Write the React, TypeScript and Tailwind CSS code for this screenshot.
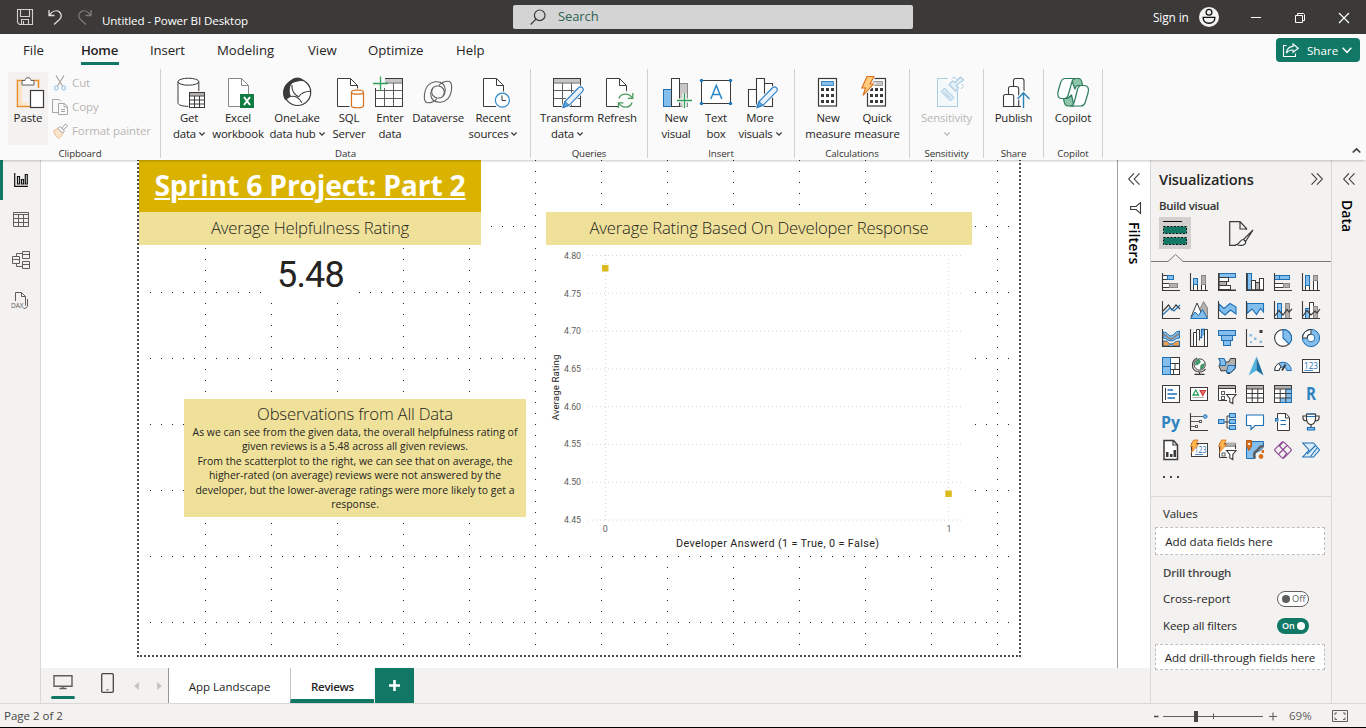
import type { ReactNode } from "react";
import clsx from "clsx";

const K = "#3b3a39";
const BLUE = "#1f6fb5";
const LIGHT = "#83beec";
const GRAY = "#b3b0ad";

type P = { children?: ReactNode };

const Svg = ({ children, w, h, className }: P & { w: number; h: number; className?: string }) => (
  <svg width={w} height={h} viewBox={`0 0 ${w} ${h}`} fill="none" className={clsx("block shrink-0 overflow-visible", className)}>
    {children}
  </svg>
);

const Chev = ({ color = K, w = 6 }: { color?: string; w?: number }) => (
  <svg width={w} height={w * 0.67} viewBox="0 0 6 4" fill="none" className="block shrink-0 overflow-visible">
    <path d="M.4 .5 3 3.2 5.6 .5" stroke={color} strokeWidth={w > 6 ? 0.9 : 1.2} />
  </svg>
);

/* ---------- ribbon icons, 32 x 33 ---------- */

const Page = ({ x = 6, color = K }: { x?: number; color?: string }) => (
  <g transform={`translate(${x} 0)`}>
    <path d="M.5 2.5H13.5L20.5 9.5V30.5H.5Z" fill="#fff" stroke={color} />
    <path d="M13.5 2.5V9.5H20.5" stroke={color} />
  </g>
);
const Pencil = ({ x = 11 }: { x?: number }) => (
  <g transform={`translate(${x} 10)`}>
    <path d="M1 21.5 3 15.5 16.3 2C17.6.6 19.3.6 20.4 1.7 21.6 2.9 21.5 4.5 20.2 5.8L7 19.3Z" fill="#fff" stroke="#fafafa" strokeWidth="3" />
    <path d="M1 21.5 3 15.5 16.3 2C17.6.6 19.3.6 20.4 1.7 21.6 2.9 21.5 4.5 20.2 5.8L7 19.3Z" fill="#e8f3fc" stroke="#2b7cc0" strokeWidth="1.1" />
    <path d="M1 21.5 3 15.5 7 19.3Z" fill="#5ea6de" stroke="#2b7cc0" />
  </g>
);
const Calc = ({ bar, x = 6 }: { bar: string; x?: number }) => (
  <g transform={`translate(${x} 0)`}>
    <rect x=".5" y="2.5" width="18" height="27.5" fill="#fff" stroke={K} strokeWidth="1.2" />
    <rect x="3.5" y="5.5" width="12" height="4" fill={bar} stroke={bar === LIGHT ? BLUE : "#8a8886"} strokeWidth=".8" />
    {[12, 18, 24].map((y) => [3, 8, 13].map((c) => <rect key={`${c}-${y}`} x={c} y={y} width="3" height="3" fill={K} />))}
  </g>
);

const SWIRL = "M15.5 22C11.5 21.600 9 18 9.800 14.500 10.500 11.500 13 9.800 16 10M15.500 22C13 25.500 8 27.500 4.500 26.500 1 24.500 2 14 6 9.500 10 5 17 4.500 21 8 24 11 24 17 21 20";

const icons: Record<string, ReactNode> = {
  paste: (
    <>
      <path d="M12 5.5H7V29.5H15V27H10V8H14Z" fill="#fbe3c4" />
      <path d="M12 4.5H5.5V30.5H18M20 4.5H26.5V12" stroke="#e8912d" strokeWidth="1.6" />
      <path d="M10 9V4.5H13C13 .8 19 .8 19 4.5H22V9Z" fill="#fff" stroke="#605e5c" />
      <rect x="18.5" y="14.5" width="13" height="17" fill="#fff" stroke={K} strokeWidth="1.2" />
    </>
  ),
  getdata: (
    <>
      <path d="M5 5.6V26.8C5 29 9.5 30.5 15.5 30.5H17V17H26V5.6" fill="#fff" />
      <ellipse cx="15.4" cy="5.7" rx="10.4" ry="3.5" fill="#fff" stroke={K} />
      <path d="M5 5.6V26.8C5 29 9.5 30.3 15.2 30.4M25.8 5.6V15" stroke={K} />
      <rect x="16.5" y="16.5" width="15" height="15" fill="#fff" stroke={K} />
      <path d="M17 17H31V19.6H17Z" fill={GRAY} />
      <path d="M16.5 20H31.5M16.5 24H31.5M16.5 28H31.5M21.5 20V31.5M26.5 20V31.5" stroke={K} />
    </>
  ),
  excel: (
    <>
      <Page color="#8a8886" />
      <rect x="18" y="18" width="14" height="14" fill="#107c41" />
      <path d="M22 21 28 29M28 21 22 29" stroke="#fff" strokeWidth="2" />
    </>
  ),
  onelake: (
    <>
      <circle cx="16.5" cy="16.3" r="13.2" fill="#fff" stroke={K} strokeWidth="1.2" />
      <path d="M9.5 5.5C12 1.400 19 .9 22 4.500 17.500 4.300 12.500 5.800 9.500 7.500Z" fill={K} stroke={K} />
      <path d="M9.500 6C3 8 .6 17 4.200 23.500L9.500 20.500C7.200 15 8.300 9.500 11 7Z" fill={K} stroke={K} />
      <path d="M9.500 20.500C14 19.500 17 20.500 21 26.800M11 9C10.500 14 13 19 17.500 20.800M17.500 21C20 17 24 15.200 29.500 15.200" stroke={K} strokeWidth="1.100" />
    </>
  ),
  sql: (
    <>
      <Page x={4} />
      <rect x="16.5" y="12.5" width="16" height="21" fill="#fafafa" />
      <path d="M18.5 16.5V30C18.5 32.3 30.5 32.3 30.5 30V16.5" fill="#fff" stroke="#d8701e" strokeWidth="1.2" />
      <ellipse cx="24.5" cy="16.2" rx="6" ry="2" fill="#fff" stroke="#d8701e" strokeWidth="1.2" />
    </>
  ),
  enter: (
    <>
      <rect x="1.5" y="2.5" width="27" height="28" fill="#fff" stroke={K} />
      <path d="M10 3H28V6.5H10Z" fill="#c8c6c4" />
      <path d="M1.5 14.5H28.5M1.5 22.5H28.5M10.5 10V30.5M19.5 7V30.5M10 7H28.5" stroke="#605e5c" />
      <path d="M0 1H11V12H0Z" fill="#fafafa" />
      <path d="M6.5 .5V15M-1 7.5H14" stroke="#2f9e5b" strokeWidth="1.3" />
    </>
  ),
  dataverse: (
    <g stroke="#605e5c" strokeWidth="1.1">
      <path d={SWIRL} />
      <path d={SWIRL} transform="rotate(180 16 16)" />
    </g>
  ),
  recent: (
    <>
      <Page />
      <circle cx="25.4" cy="24.2" r="9" fill="#fafafa" />
      <circle cx="25.4" cy="24.2" r="7" fill="#fff" stroke="#2b88c8" strokeWidth="1.2" />
      <path d="M25 19.5V24.5H29" stroke={K} />
    </>
  ),
  transform: (
    <>
      <rect x="2.5" y="2.5" width="27" height="28" fill="#fff" stroke={K} />
      <path d="M3 3H29V6.5H3Z" fill="#c8c6c4" />
      <path d="M2.5 7H29.5M2.5 14.5H29.5M2.5 22.5H29.5M11.5 7V30.5M20.5 7V30.5" stroke="#605e5c" />
      <Pencil />
    </>
  ),
  refresh: (
    <>
      <Page x={5} />
      <circle cx="24.5" cy="24.5" r="9.5" fill="#fafafa" />
      <path d="M18 22.5C19.8 17 28 16.5 31 21.8M31 26.5C29.2 32.3 21 32.7 18 27.3" stroke="#4a9b5f" strokeWidth="1.3" />
      <path d="M31.8 17V22.3H26.8M17.4 32V26.8H22.4" stroke="#4a9b5f" strokeWidth="1.3" />
    </>
  ),
  newvisual: (
    <>
      <rect x="3.5" y="13.5" width="8" height="17" fill={LIGHT} stroke={BLUE} />
      <rect x="19.5" y="7.5" width="8" height="23" fill="#c8c6c4" stroke="#8a8886" />
      <rect x="11.5" y="2.5" width="8" height="28" fill="#fff" stroke={K} />
      <path d="M17 24.5H32M24.5 17V32" stroke="#fafafa" strokeWidth="4" />
      <path d="M17 24.5H32M24.5 17V32" stroke="#2f9e5b" strokeWidth="1.3" />
    </>
  ),
  textbox: (
    <>
      <rect x="1.5" y="4.5" width="29" height="23" fill="#fff" stroke={K} />
      {[[1.5, 4.5], [30.5, 4.5], [1.5, 27.5], [30.5, 27.5]].map(([x, y]) => (
        <circle key={`${x}-${y}`} cx={x} cy={y} r="1.7" fill="#1a78b8" />
      ))}
      <path d="M10.8 23 16.3 9.5 21.8 23M12.8 18.5H19.9" stroke="#2b88c8" strokeWidth="1.5" />
    </>
  ),
  morevisuals: (
    <>
      <path d="M4.5 13.5H12.5V30.5H4.5ZM12.5 2.5H20.5V30.5H12.5ZM20.5 7.5H28.5V30.5H20.5Z" fill="#fff" stroke={K} strokeWidth="1.1" />
      <Pencil x={12} />
    </>
  ),
  newmeasure: <Calc bar={LIGHT} />,
  quickmeasure: (
    <>
      <Calc bar="#c8c6c4" />
      <path d="M6 .5H13L9 8H12.5L2 19.5 4.5 12H.8Z" fill="#ffd08a" stroke="#fafafa" strokeWidth="3" />
      <path d="M6 .5H13L9 8H12.5L2 19.5 4.5 12H.8Z" fill="#ffcb7d" stroke="#d8701e" strokeWidth="1.1" />
    </>
  ),
  sensitivity: (
    <g stroke="#a9cbe0">
      <path d="M6.5 2.5H17M26.5 14V30.5H6.5V2.5" fill="#f3f8fb" />
      <path d="M10 15.5 13.5 12 23 21.5 19.5 25Z" fill="#d6e8f3" />
      <path d="M14 17 18.5 21.5" />
      <path d="M18 8.5 24.5 15 27.5 12 25 9.5 32.5 4 29.5 1 24 6.5 21.5 5Z" fill="#e4f1f8" strokeWidth="1.2" />
      <path d="M20.5 3 23 .8 26 3.5M30.5 8 32.5 10.5 30 13" />
    </g>
  ),
  publish: (
    <>
      <path d="M15.5 10V5C15.5 3 16 2.5 17.5 2.5H24C25.5 2.5 26 3 26 5V15M10.5 18V12.5C10.5 11 11 10.5 12.5 10.5H18C20 10.5 20.7 11 20.7 12.5V30M5.5 20.5C5.5 19 6 18.5 7.5 18.5H13.5C15 18.5 15.7 19 15.7 20.5V30.5H5.5ZM15.7 30.5H23" fill="#fff" stroke={K} strokeWidth="1.1" />
      <path d="M25.5 32V17M19.5 23 25.5 16.8 31.5 23" stroke="#fafafa" strokeWidth="3.5" />
      <path d="M25.5 32V17M19.5 23 25.5 16.8 31.5 23" stroke="#2b82b8" strokeWidth="1.4" />
    </>
  ),
  copilot: (
    <g stroke="#2b7a5c" strokeWidth="1.2" strokeLinejoin="round">
      <path d="M16.5 2.5H22C24.5 2.5 25 5.5 25.5 9.5H21C19 9.5 18.5 11 18 13L14.5 4Z" fill="#8cc5a8" />
      <path d="M6.5 22.5C7 26.5 8 30 10.5 30H17L14.5 19 10.5 22.5Z" fill="#8cc5a8" />
      <path d="M8.5 2.5H18.5C15.5 2.5 15 5 13.5 11L11.5 18C10.8 21 10 22.5 7.5 22.5H5C1 22.5.2 19.5 1.2 15L3.5 7C4.3 4 5.5 2.5 8.5 2.5Z" fill="#fff" />
      <path d="M23.5 30H13.5C16.5 30 17 27.5 18.5 21.5L20.2 14.5C21 11 22 9.5 24.5 9.5H27C31 9.5 32.3 12.5 31 17L28.5 25.5C27.7 28.5 26.5 30 23.5 30Z" fill="#fff" />
    </g>
  ),
};

type Btn = { icon: string; w: string; lines: string[]; chev?: boolean; off?: boolean };

const RibbonButton = ({ icon, w, lines, chev, off }: Btn) => (
  <div className={clsx("flex shrink-0 flex-col items-center pt-[7px]", w, off ? "text-[#b8b6b4]" : "text-[#252423]")}>
    <Svg w={32} h={33}>{icons[icon]}</Svg>
    <div className="mt-[1px] flex flex-col items-center text-[11.4px] leading-[16px] tracking-[-0.2px] whitespace-nowrap">
      {lines.map((l, i) => (
        <span key={i} className="flex h-4 items-center gap-[3px]">
          {l}
          {chev && i === lines.length - 1 && <Chev color={off ? "#b8b6b4" : K} />}
        </span>
      ))}
    </div>
  </div>
);

const groups: { label: string; w: string; pad: string; items: Btn[] }[] = [
  {
    label: "Data", w: "w-[370px]", pad: "pl-[4px]",
    items: [
      { icon: "getdata", w: "w-[48px]", lines: ["Get", "data"], chev: true },
      { icon: "excel", w: "w-[50px]", lines: ["Excel", "workbook"] },
      { icon: "onelake", w: "w-[68px]", lines: ["OneLake", "data hub"], chev: true },
      { icon: "sql", w: "w-[36px]", lines: ["SQL", "Server"] },
      { icon: "enter", w: "w-[46px]", lines: ["Enter", "data"] },
      { icon: "dataverse", w: "w-[50px]", lines: ["Dataverse"] },
      { icon: "recent", w: "w-[60px]", lines: ["Recent", "sources"], chev: true },
    ],
  },
  {
    label: "Queries", w: "w-[117px]", pad: "pl-[5px]",
    items: [
      { icon: "transform", w: "w-[62px]", lines: ["Transform", "data"], chev: true },
      { icon: "refresh", w: "w-[38px]", lines: ["Refresh"] },
    ],
  },
  {
    label: "Insert", w: "w-[147px]", pad: "pl-[8px]",
    items: [
      { icon: "newvisual", w: "w-[40px]", lines: ["New", "visual"] },
      { icon: "textbox", w: "w-[40px]", lines: ["Text", "box"] },
      { icon: "morevisuals", w: "w-[48px]", lines: ["More", "visuals"], chev: true },
    ],
  },
  {
    label: "Calculations", w: "w-[115px]", pad: "pl-[9px]",
    items: [
      { icon: "newmeasure", w: "w-[48px]", lines: ["New", "measure"] },
      { icon: "quickmeasure", w: "w-[50px]", lines: ["Quick", "measure"] },
    ],
  },
  { label: "Sensitivity", w: "w-[74px]", pad: "pl-[0px]", items: [{ icon: "sensitivity", w: "w-[73px]", lines: ["Sensitivity", ""], chev: true, off: true }] },
  { label: "Share", w: "w-[60px]", pad: "pl-[0px]", items: [{ icon: "publish", w: "w-[59px]", lines: ["Publish"] }] },
  { label: "Copilot", w: "w-[59px]", pad: "pl-[0px]", items: [{ icon: "copilot", w: "w-[58px]", lines: ["Copilot"] }] },
];

const Group = ({ label, w, children }: P & { label: string; w: string }) => (
  <div className={clsx("flex h-[89px] shrink-0 flex-col border-r border-[#d2d0ce]", w)}>
    <div className="flex h-[77px] shrink-0 items-start">{children}</div>
    <div className="mt-[1px] text-center text-[9.7px] leading-[14px] tracking-[-0.1px] text-[#323130]">{label}</div>
  </div>
);

const TitleBar = () => (
  <header className="flex h-[34px] shrink-0 items-center bg-[#3b3a39] text-white">
    <Svg w={16} h={16} className="ml-[17px]">
      <path d="M.5 .5H15.5V15.5H2.5L.5 13.5ZM3.5 .5V7.5H12.5V.5M4.5 15V10.5H11.5V15M6.5 12V15" stroke="#d2d0ce" strokeWidth="1.1" />
    </Svg>
    <Svg w={14} h={16} className="ml-[15px]">
      <path d="M1 1V6.5H6.5M1.3 6.3C4 2.5 8 .8 11 2.6 14.3 5 13.5 8.5 11.5 10.5L6 15.5" stroke="#e1dfdd" strokeWidth="1.3" />
    </Svg>
    <Svg w={14} h={16} className="ml-[16px]">
      <path d="M13 1V6.5H7.5M12.7 6.3C10 2.5 6 .8 3 2.6-.3 5 .5 8.5 2.5 10.5L8 15.5" stroke="#7c7a78" strokeWidth="1.3" />
    </Svg>
    <span className="mt-[7px] ml-[10px] w-[411px] text-[11.6px] tracking-[-0.1px] whitespace-nowrap">Untitled - Power BI Desktop</span>
    <div className="flex h-6 w-[400px] items-center rounded-[2px] bg-[#d4d4d4] pl-[17px]">
      <Svg w={16} h={16}>
        <circle cx="9.7" cy="6.3" r="5.3" stroke={K} strokeWidth="1.2" />
        <path d="M6 10.2 .7 15.5" stroke={K} strokeWidth="1.2" />
      </Svg>
      <span className="ml-[12px] text-[13px] tracking-[-0.1px] text-[#2f6353]">Search</span>
    </div>
    <span className="mt-[2px] ml-[240px] w-[46px] text-[11.8px] tracking-[-0.1px] whitespace-nowrap">Sign in</span>
    <Svg w={20} h={20}>
      <circle cx="10" cy="10" r="10" fill="#f3f2f1" />
      <circle cx="10" cy="5.3" r="2.9" stroke="#111" strokeWidth="1.3" />
      <path d="M4.2 10.4H15.8C16 13.8 14 16.3 10 16.3S4 13.8 4.2 10.4Z" stroke="#111" strokeWidth="1.4" />
    </Svg>
    <Svg w={10} h={10} className="ml-[32px]"><path d="M0 5.5H10" stroke="#fff" /></Svg>
    <Svg w={10} h={10} className="mt-[2px] ml-[34px]">
      <path d="M.5 2.5H7.5V9.5H.5ZM2.5 2V.5H8.5L9.5 1.5V7.5H8" stroke="#fff" />
    </Svg>
    <Svg w={10} h={10} className="mt-[2px] ml-[34px]"><path d="M0 0 10 10M10 0 0 10" stroke="#fff" strokeWidth="1.2" /></Svg>
  </header>
);

const menu: [string, string][] = [
  ["File", "w-[58px]"], ["Home", "w-[70px]"], ["Insert", "w-[66px]"], ["Modeling", "w-[91px]"],
  ["View", "w-[60px]"], ["Optimize", "w-[88px]"], ["Help", "w-[40px]"],
];

const Menu = () => (
  <nav className="flex h-[35px] shrink-0 items-start bg-[#fafafa] pl-[23px] text-[13.2px] leading-[20px] text-[#252423]">
    {menu.map(([m, w]) => (
      <div key={m} className={w}>
        <span className={clsx("inline-block h-[31px] pt-[6px] whitespace-nowrap", m === "Home" && "w-[38px] border-b-3 border-[#117865] font-semibold tracking-[-0.3px]", m === "Insert" && "-ml-px tracking-[-0.1px]")}>{m}</span>
      </div>
    ))}
    <button className="mt-1 mr-[6px] ml-auto flex h-6 w-[84px] items-center rounded bg-[#117865] pl-[7px] text-white">
      <Svg w={16} h={14}>
        <path d="M3.5 2.5H.5V13.5H12.5V10.5" stroke="#fff" strokeWidth="1.1" />
        <path d="M10 1 15.3 5.3 10 9.3V7C7 6.8 5 7.8 3.3 10.3 3.8 6.3 6 3.6 10 3.4Z" stroke="#fff" strokeWidth="1.1" />
      </Svg>
      <span className="mt-[2px] ml-[8px] text-[11.6px]">Share</span>
      <span className="ml-[4px]"><Chev color="#fff" w={10} /></span>
    </button>
  </nav>
);

const Ribbon = () => (
  <div className="relative z-10 flex h-[91px] shrink-0 items-start bg-[#fafafa] shadow-[0_2px_2px_-1px_rgba(0,0,0,0.22)]">
    <Group label="Clipboard" w="w-[161px]">
      <div className="mt-[3px] ml-[8px] flex h-[73px] w-[40px] flex-col items-center bg-[#f3f2f1] pt-[4px]">
        <Svg w={32} h={33} className="-ml-[1px]">{icons.paste}</Svg>
        <span className="mt-[1px] text-[11.5px] leading-[16px] tracking-[-0.1px] text-[#252423]">Paste</span>
      </div>
      <div className="flex flex-col pt-[2px] pl-[4px] text-[11.5px] tracking-[-0.1px] text-[#b8b6b4]">
        <div className="flex h-6 items-center gap-[4px]">
          <Svg w={16} h={16}>
            <path d="M4 .5 10.5 11M12 .5 5.5 11" stroke="#a19f9d" strokeWidth="1.1" />
            <circle cx="4.3" cy="13" r="2" stroke="#8bb8dc" /><circle cx="11.7" cy="13" r="2" stroke="#8bb8dc" />
          </Svg>
          Cut
        </div>
        <div className="flex h-6 items-center gap-[4px]">
          <Svg w={16} h={16}>
            <path d="M6 13.5H.5V.5H7L9 2.5M6.5 4.5H12.5L15.5 7.5V15.5H6.5ZM12 4.5V8H15.5M9 10.5H13M9 12.5H13" stroke="#a8a6a4" />
          </Svg>
          Copy
        </div>
        <div className="flex h-6 items-center gap-[4px] whitespace-nowrap">
          <Svg w={16} h={16}>
            <path d="M1.5 8 6.5 5 11.5 10 7 15.5C4.5 14.5 2.5 11.5 1.5 8Z" fill="#fbe3c9" stroke="#e8bd94" />
            <path d="M6 5.5 8 3.5 12.5 8 10.5 10ZM10 5 13.5 1 15.5 3 11.5 6.5Z" fill="#fff" stroke="#a19f9d" />
          </Svg>
          Format painter
        </div>
      </div>
    </Group>
    {groups.map((g) => (
      <Group key={g.label} label={g.label} w={g.w}>
        <div className={clsx("flex", g.pad)}>
          {g.items.map((b) => <RibbonButton key={b.icon} {...b} />)}
        </div>
      </Group>
    ))}
    <Svg w={9} h={5} className="mt-[79px] mr-[5px] ml-auto"><path d="M.7 4.5 4.5 .9 8.3 4.5" stroke={K} strokeWidth="1.6" /></Svg>
  </div>
);

const Rail = () => (
  <aside className="flex w-[41px] shrink-0 flex-col border-r border-[#dad8d6] bg-[#f3f2f1]">
    <div className="flex h-[40px] items-center border-l-3 border-[#117865] pl-[11px]">
      <Svg w={14} h={14}>
        <path d="M.7 0V13.3H14M3.5 11V3.5H5.5V11ZM7.5 11V6.5H9.5V11ZM11.3 11V1.5H13.3V11Z" stroke="#111" strokeWidth="1.2" />
      </Svg>
    </div>
    <div className="flex h-[40px] items-start pt-[12px] pl-[13px]">
      <Svg w={16} h={15}><path d="M.5 .5H15.5V14.5H.5ZM.5 2.5H15.5M.5 6.5H15.5M.5 10.5H15.5M5.5 2.5V14.5M10.5 2.5V14.5" stroke="#605e5c" /></Svg>
    </div>
    <div className="flex h-[40px] items-center pl-[12px]">
      <Svg w={18} h={18}><path d="M10.5 .5H17.5V7.5H10.5ZM10.5 10.5H17.5V17.5H10.5ZM.5 5.5H7.5V12.5H.5ZM.5 8.500H7.5M10.5 3.500H17.5M10.5 13.500H17.5M4.5 5.5V2.5H10M4.5 12.5V15.5H10" stroke="#605e5c" /></Svg>
    </div>
    <div className="flex h-[40px] items-start pt-[12px] pl-[11px]">
      <Svg w={18} h={17}>
        <path d="M4.5 9V.5H10.5L14.5 4.5V13.5M10.5 .5V4.5H14.5M12.5 16.5C15.5 16.5 16.5 15 16.5 13V7" stroke="#605e5c" />
        <text x="0" y="16" fontSize="6.5" className="fill-[#605e5c]">DAX</text>
      </Svg>
    </div>
  </aside>
);

const cols = Array.from({ length: 13 }, (_, i) => 68 + 66 * i);
const rows = Array.from({ length: 7 }, (_, i) => 66 + 66 * i);
const ticks = ["4.80", "4.75", "4.70", "4.65", "4.60", "4.55", "4.50", "4.45"];

const Scatter = () => (
  <Svg w={426} h={310} className="bg-white font-['Roboto',sans-serif]">
    {ticks.map((t, i) => (
      <g key={t}>
        <line x1="42" x2="418" y1={10.5 + i * 37.8} y2={10.5 + i * 37.8} stroke="#d8d6d4" strokeDasharray="1 3" />
        <text x="18" y={13.8 + i * 37.7} fontSize="8.8" textLength="17" className="fill-[#605e5c]">{t}</text>
      </g>
    ))}
    <line x1="59.5" x2="59.5" y1="10" y2="276" stroke="#d0cecc" strokeDasharray="1 3" />
    <line x1="402.5" x2="402.5" y1="10" y2="276" stroke="#e0dedc" strokeDasharray="1 3" />
    <rect x="56" y="20" width="6.5" height="6.5" fill="#dcbb1f" />
    <rect x="399.3" y="245.5" width="6.5" height="6.5" fill="#dcbb1f" />
    <text x="59.3" y="287" fontSize="8.8" textAnchor="middle" className="fill-[#605e5c]">0</text>
    <text x="403" y="287" fontSize="8.8" textAnchor="middle" className="fill-[#605e5c]">1</text>
    <text x="130" y="302" fontSize="10.8" textLength="203" className="fill-[#252423]">Developer Answerd (1 = True, 0 = False)</text>
    <text transform="translate(12.5 175.5) rotate(-90)" fontSize="9.8" textLength="66" className="fill-[#252423]">Average Rating</text>
  </Svg>
);

const Canvas = () => (
  <div className="relative h-[508px] overflow-hidden bg-white">
    <div className="absolute -top-[4px] left-[96px] h-[501px] w-[884px] border-2 border-dotted border-[#504e4c]">
      <svg width="880" height="497" className="absolute top-[2px] -left-[2px] block">
        {rows.map((y) => <line key={y} x1="13" x2="880" y1={y + 0.5} y2={y + 0.5} stroke="#222" strokeDasharray="1 10" />)}
        {cols.map((x) => <line key={x} x1={x + 0.5} x2={x + 0.5} y1="0" y2="485" stroke="#222" strokeDasharray="1 10" />)}
      </svg>
    </div>
    <div className="absolute top-0 left-[98px] flex h-[52px] w-[342px] items-center justify-center bg-[#dab300] pb-[2px] text-[28.3px] font-bold tracking-[-0.2px] whitespace-nowrap text-white underline decoration-2 underline-offset-[2px]">Sprint 6 Project: Part 2</div>
    <div className="absolute top-[52px] left-[98px] flex h-[33px] w-[342px] items-center justify-center bg-[#efe19a] pb-[2px] text-[16.7px] font-light tracking-[-0.2px] text-[#252423]">Average Helpfulness Rating</div>
    <div className="absolute top-[88px] left-[221px] flex h-[50px] w-[97px] items-center justify-center bg-white pt-[3px] font-['Roboto',sans-serif] text-[36px] tracking-[-0.8px] text-[#252423]">5.48</div>
    <div className="absolute top-[239px] left-[143px] h-[118px] w-[342px] bg-[#efe19a] pt-[4px] text-center text-[#252423]">
      <div className="text-[16.7px] leading-[22px] font-light tracking-[-0.2px]">Observations from All Data</div>
      <div className="text-[10.45px] leading-[14.4px] whitespace-nowrap">
        As we can see from the given data, the overall helpfulness rating of<br />
        given reviews is a 5.48 across all given reviews.<br />
        From the scatterplot to the right, we can see that on average, the<br />
        higher-rated (on average) reviews were not answered by the<br />
        developer, but the lower-average ratings were more likely to get a<br />
        response.
      </div>
    </div>
    <div className="absolute top-[52px] left-[505px] w-[426px]">
      <div className="flex h-[33px] items-center justify-center bg-[#efe19a] pb-[2px] text-[16.7px] font-light tracking-[-0.2px] text-[#252423]">Average Rating Based On Developer Response</div>
      <Scatter />
    </div>
  </div>
);

const Tabs = () => (
  <div className="flex h-[35px] bg-[#f3f2f1] text-[11.5px] text-[#252423]">
    <div className="ml-[10px] flex w-6 flex-col items-center pt-[7px]">
      <Svg w={20} h={14}><path d="M1 .8H19V11.2H1ZM10 11V13.5M6.5 13.5H13.5" stroke="#605e5c" strokeWidth="1.4" /></Svg>
      <div className="mt-[7px] h-[3px] w-6 rounded-full bg-[#117865]" />
    </div>
    <Svg w={13} h={20} className="mt-[5px] ml-[26px]">
      <rect x=".7" y=".7" width="11.6" height="18.6" rx="1" stroke="#484644" strokeWidth="1.3" /><path d="M5.5 16.8H7.5" stroke="#484644" />
    </Svg>
    <Svg w={5} h={8} className="mt-[14px] ml-[20px]"><path d="M5 0V8L0 4Z" fill="#c8c6c4" /></Svg>
    <Svg w={5} h={8} className="mt-[14px] ml-[18px]"><path d="M0 0V8L5 4Z" fill="#c8c6c4" /></Svg>
    <div className="ml-[6px] flex w-[122px] items-center justify-center border-l border-[#979593] bg-white pt-[3px]">App Landscape</div>
    <div className="flex w-[84px] items-center justify-center border-b-4 border-l border-b-[#117865] border-l-[#c8c6c4] bg-white pt-[6px] font-semibold tracking-[-0.3px]">Reviews</div>
    <div className="ml-[1px] flex w-[39px] items-center justify-center bg-[#117865]">
      <Svg w={11} h={11}><path d="M5.5 0V11M0 5.5H11" stroke="#fff" strokeWidth="2.6" /></Svg>
    </div>
  </div>
);

const DoubleChev = ({ right }: { right?: boolean }) => (
  <Svg w={12} h={12} className={right ? "rotate-180" : ""}>
    <path d="M6 .3 .7 6 6 11.7M11.5 .3 6.2 6 11.5 11.7" stroke={K} strokeWidth="1.1" />
  </Svg>
);

/* ---------- visual gallery, 18 x 18 ---------- */

const Axis = () => <path d="M.5 0V17.5H18" stroke={K} strokeWidth="1.1" />;
const R = ({ b, f = "#fff", s = K }: { b: [number, number, number, number]; f?: string; s?: string }) => (
  <rect x={b[0]} y={b[1]} width={b[2]} height={b[3]} fill={f} stroke={s} />
);
const Grid = () => <path d="M.5 .5H17.5V17.5H.5ZM.5 4H17.5M.5 8.5H17.5M.5 13H17.5M6.2 4V17.5M11.8 4V17.5" stroke={K} />;
const Funnel = () => <path d="M8.5 9.5H18L14.8 13.5V18.5L11.8 17V13.5Z" fill="#fff" stroke={K} strokeWidth="1.1" />;
const Bolt = () => <path d="M3.5 -1H8L6 3.5H8.5L1.5 11.5 3 5.5H.5Z" fill="#ffb84d" stroke="#d8701e" strokeWidth=".8" />;

const gallery: ReactNode[] = [
  <><R b={[.5, 2.5, 5, 4]} /><R b={[5.5, 2.5, 6, 4]} f={LIGHT} s={BLUE} /><R b={[.5, 10.5, 7, 4]} /><R b={[7.5, 10.5, 8, 4]} f={GRAY} s="#8a8886" /><Axis /></>,
  <><R b={[3.5, 11.5, 4, 6]} /><R b={[3.5, 5.5, 4, 6]} f={LIGHT} s={BLUE} /><R b={[11.5, 11.5, 4, 6]} /><R b={[11.5, 2.5, 4, 9]} f={GRAY} s="#8a8886" /><Axis /></>,
  <><R b={[.5, .5, 17, 4]} f={LIGHT} s={BLUE} /><R b={[.5, 4.5, 10, 4]} /><R b={[.5, 8.5, 8, 4]} f={GRAY} /><R b={[.5, 12.5, 12, 4]} /><path d="M.8 0V17.2H18" stroke={K} strokeWidth="1.6" /></>,
  <><R b={[1.5, .5, 4, 16.5]} f={LIGHT} s={BLUE} /><R b={[5.5, 7.5, 4, 9.5]} /><R b={[9.5, 9.5, 4, 7.5]} f={GRAY} /><R b={[13.5, 5.5, 4, 11.5]} /><path d="M.8 0V17.2H18" stroke={K} strokeWidth="1.6" /></>,
  <><R b={[.5, 2.5, 15, 4]} f={LIGHT} s={BLUE} /><path d="M5.5 2.5V6.5" stroke={BLUE} /><R b={[.5, 10.5, 9, 4]} /><R b={[9.5, 10.5, 6, 4]} f={GRAY} s="#8a8886" /><Axis /></>,
  <><R b={[3.5, 12.5, 4, 5]} /><R b={[3.5, 2.5, 4, 10]} f={LIGHT} s={BLUE} /><R b={[11.5, 7.5, 4, 10]} /><R b={[11.5, 2.5, 4, 5]} f={GRAY} s="#8a8886" /><Axis /></>,
  <><Axis /><path d="M1 10 6.5 4 10 9 14 4 18 8" stroke={K} strokeWidth="1.2" /><path d="M1 13.5 8 7 12 10 18 4" stroke={BLUE} strokeWidth="1.2" /></>,
  <><path d="M13.5 .5 6 17H17.5V7Z" fill={GRAY} stroke="#8a8886" /><path d="M1 16 7 2 13 16Z" fill="#fff" stroke={K} /><path d="M.5 17.5 5 11 8.500 14.500 12.500 8.500 17.500 17.500Z" fill={LIGHT} stroke={BLUE} /></>,
  <><path d="M1 3 6 7.5 12 2.5 18 6V13L12.5 9 7 14 1 9Z" fill={LIGHT} stroke={BLUE} strokeWidth="1.1" /><Axis /></>,
  <><path d="M1 2.5H17.5V11L14.5 7.5 10.5 13.5 6 8 1 12.5Z" fill={LIGHT} stroke={BLUE} strokeWidth="1.1" /><Axis /></>,
  <><R b={[3.5, 2.5, 4, 15]} f={LIGHT} s={BLUE} /><R b={[11.5, 2.5, 4, 15]} f={GRAY} s="#8a8886" /><path d="M1 15 5 9.5 9 14 13 8.5 15 11 18 8" stroke={K} strokeWidth="1.2" /><Axis /></>,
  <><R b={[3.5, 7.5, 4, 10]} f={LIGHT} s={BLUE} /><R b={[7.5, 1.5, 4, 16]} /><R b={[11.5, 5.5, 4, 12]} f={GRAY} s="#8a8886" /><path d="M1 15 5 9.5 9 14 13 10 15 12 18 8" stroke={K} strokeWidth="1.2" /><Axis /></>,
  <><path d="M1 3C6 3 6 7 9 7S13 2 17.5 2V9C13 9 13 12 9 12S5 9 1 9Z" fill={LIGHT} stroke={BLUE} /><path d="M1 6C5 5 5 10 9 10S13 5 17.5 5" stroke="#8a8886" strokeWidth="1.8" /><path d="M1 12H4C6 12 6 15 9 15S12 12 17.5 12V17H12C11 15.500 7 15.500 6 17H1Z" fill="#f0a04b" stroke={BLUE} /><Axis /></>,
  <><path d="M3.5 17.500V3.500H6.500V17.500M6.500 3.500V.5H9.500V11.500" fill="#fff" stroke={K} /><path d="M9.500 8.500H11.500V.5H14.500V6" fill={LIGHT} stroke={BLUE} strokeWidth="1.400" /><path d="M14.500 17.500V.5H17.500V17.500" fill="#fff" stroke={K} /><Axis /></>,
  <><R b={[.5, 1.5, 17, 5]} f={LIGHT} s={BLUE} /><R b={[3.5, 6.5, 11, 5]} f={LIGHT} s={BLUE} /><R b={[5.5, 11.5, 7, 5]} f={LIGHT} s={BLUE} /></>,
  <><Axis /><path d="M3.5 5H6V7.5H3.5ZM8 8.5H10.5V11H8ZM13.5 11.5H16V14H13.5ZM4 12H6V14H4Z" fill="#8ebbdd" /><path d="M13.5 1H16.5V4H13.5Z" fill={K} /></>,
  <><circle cx="9" cy="9" r="8.4" fill="#fff" stroke={K} strokeWidth="1.1" /><path d="M9 .6A8.4 8.4 0 0 1 15 15L9 9Z" fill={LIGHT} stroke={BLUE} strokeWidth="1.1" /></>,
  <><circle cx="9" cy="9" r="6.3" stroke={LIGHT} strokeWidth="5" /><path d="M9 2.7A6.3 6.3 0 0 0 2.7 9" stroke="#fff" strokeWidth="4.5" /><circle cx="9" cy="9" r="8.6" stroke={BLUE} /><circle cx="9" cy="9" r="3.8" fill="#fff" stroke={BLUE} /><path d="M9 .4A8.6 8.6 0 0 0 .4 9H5A4 4 0 0 1 9 5Z" stroke={K} /></>,
  <><R b={[.5, .5, 17, 17]} /><R b={[.5, .5, 8, 9]} f={LIGHT} s={BLUE} /><R b={[.5, 9.5, 8, 8]} f={LIGHT} s={BLUE} /><path d="M8.5 6.500H17.5M8.5 12.5H17.5M13 6.500V12.5M11.5 12.5V17.5" stroke={K} /></>,
  <><circle cx="9.7" cy="7.5" r="5.6" fill="#fff" stroke={K} /><path d="M6 4.5 9 2.3 10.5 5 8 7.5 5.5 8ZM11 8 14.5 6.5 13 11 10.5 12Z" fill="#43a26d" stroke="#24794a" strokeWidth=".7" /><path d="M7 1C1 4 1 12.5 7 14.5 10.5 15.5 14 14 15.5 12M9.5 15V17.3M4.5 17.4H14.5" stroke={K} strokeWidth="1.1" /></>,
  <><path d="M.7 1.5H6L7.5 5H10.5L12.5 1.5H17.5V10C17.5 13 14 13.5 12 16.5H9.5L7.5 13.5 3 14 1 9 2.5 5Z" fill={GRAY} stroke={K} /><path d="M1 1.5H6L7.5 5V8.5H1.5L2.5 5ZM10 8.5H17V11L12.5 15.5H8.5Z" fill={LIGHT} stroke={BLUE} /></>,
  <><path d="M10.5 -.5 2.5 18.5 10.5 13.5Z" fill="#52b4dc" /><path d="M10.5 -.5 17.5 18.5 10.5 13.5Z" fill="#1d6f9f" /></>,
  <><path d="M.7 13.5A8.3 8.3 0 0 1 17.3 13.5H12.7A3.7 3.7 0 0 0 5.3 13.5Z" fill={LIGHT} stroke={BLUE} /><path d="M.7 13.5A8.3 8.3 0 0 1 5 6.3L7 10A4 4 0 0 0 5 13.5Z" fill="#fff" stroke={K} /><path d="M8 13.5 11.5 7.5" stroke={K} strokeWidth="1.8" /></>,
  <><R b={[.5, 2.5, 17, 13]} /><text x="2" y="11.5" fontSize="8.5" textLength="14" lengthAdjust="spacingAndGlyphs" className="fill-[#1f6fb5]">123</text><path d="M2.5 13.5H11" stroke={BLUE} strokeWidth=".8" /></>,
  <><R b={[.5, .5, 17, 17]} /><path d="M3.5 3V15" stroke={K} /><path d="M5.5 5H11M5.5 9H15M5.5 13H13" stroke={BLUE} strokeWidth="1.6" /></>,
  <><R b={[.5, 2.5, 17, 13]} /><path d="M3 10 5.8 5 8.5 10Z" stroke="#2f9e5b" strokeWidth="1.3" /><path d="M10 5.5H15.5L12.8 10.5Z" fill="#e07a76" stroke="#cc3a35" strokeWidth="1.1" /><path d="M2.5 12.500H14" stroke={GRAY} /></>,
  <><path d="M9 15.5H.5V.5H17.5V8" fill="#fff" stroke={K} /><path d="M.5 3.5H17.5" stroke={K} /><path d="M1 1H17V3H1Z" fill={GRAY} /><R b={[3.5, 6.5, 3, 3]} s="#605e5c" /><R b={[3.5, 11.5, 3, 3]} s="#605e5c" /><Funnel /></>,
  <><R b={[.5, .5, 17, 17]} /><path d="M1 1H17V4H1Z" fill={GRAY} /><Grid /></>,
  <><R b={[.5, .5, 17, 17]} /><path d="M1 1H17V4H1Z" fill={GRAY} /><path d="M12 4H17.5V17.5H6.2V13H12Z" fill={LIGHT} /><Grid /><path d="M12 4.5H17.5V17.5H6.2" stroke={BLUE} /></>,
  <text x="4" y="15" fontSize="17" className="fill-[#2f84c0] font-bold" textLength="10" lengthAdjust="spacingAndGlyphs">R</text>,
  <text x="-1" y="14.5" fontSize="16.5" className="fill-[#2f84c0] font-bold" textLength="19" lengthAdjust="spacingAndGlyphs">Py</text>,
  <><Axis /><path d="M1 3.5H13M1 8.5H10M1 13.5H6" stroke="#605e5c" /><circle cx="15.3" cy="3.5" r="1.8" fill={LIGHT} stroke={BLUE} /><R b={[9.500, 7.500, 2, 2]} s="#605e5c" /><R b={[5.500, 12.500, 2, 2]} s="#605e5c" /></>,
  <><path d="M6 9H9M12 3H9V15H12M9 9H12" stroke={K} /><R b={[.5, 6.500, 5.5, 4]} f={LIGHT} s={BLUE} /><R b={[11.500, .5, 6, 4]} f={LIGHT} s={BLUE} /><R b={[11.500, 6.500, 6, 4]} f={LIGHT} s={BLUE} /><R b={[11.500, 12.500, 6, 4]} f={LIGHT} s={BLUE} /></>,
  <path d="M.5 2H17.5V12.5H9L5 16.5V12.5H.5Z" fill="#fff" stroke={BLUE} strokeWidth="1.1" />,
  <><path d="M3.5 5V.5H12L15.5 4.5V17.5H3.5V9" fill="#fff" stroke={K} /><path d="M11.5 .5V5H15.5" stroke={K} /><R b={[1.500, 5.500, 2.500, 2.500]} f={LIGHT} s={BLUE} /><path d="M6.5 7.500H12M6.5 11.5H12" stroke={BLUE} /></>,
  <><path d="M4.5 1H13.5V6C13.5 9.5 11 11.5 9 11.5S4.5 9.5 4.5 6ZM4.5 3H1V5C1 7.5 3 8 5 8M13.5 3H17V5C17 7.5 15 8 13 8M9 11.5V14.5" fill="#fff" stroke={K} strokeWidth="1.2" /><path d="M5 1H13M5 3.5H13M5.5 14.5H12.5V17H5.5Z" fill={LIGHT} stroke={BLUE} strokeWidth="1.2" /></>,
  <><path d="M2 -.5H11.5L15.5 4V18.5H2Z" fill="#fff" stroke={K} strokeWidth="1.5" /><path d="M11 -.5V4H15.5" stroke={K} strokeWidth="1.2" /><path d="M4 11H6.5V16H4ZM8 13H10.5V16H8ZM11.5 9H14V16H11.5Z" fill={K} /></>,
  <><R b={[1.5, 2.5, 16, 13]} /><text x="4.5" y="11.5" fontSize="8.5" textLength="12" lengthAdjust="spacingAndGlyphs" className="fill-[#1f6fb5]">123</text><path d="M5 13.5H13" stroke={BLUE} strokeWidth=".8" /><Bolt /></>,
  <><path d="M9 16.5H1.5V2.5H17.5V8" fill="#fff" stroke={K} /><path d="M1.5 5H17.5" stroke={K} /><path d="M8 1.5H17.5V4.5H8Z" fill={GRAY} /><R b={[4, 12, 3, 3]} s="#605e5c" /><Funnel /><Bolt /></>,
  <><path d="M.5 5V17.5H9C9.5 14 8 13 10.5 11.5S16 9.5 17.5 5V.5H6" fill={LIGHT} stroke={BLUE} /><path d="M8.5 17.5C7 12 9 11 11 9.5S13 5 17.5 5" stroke="#605e5c" strokeWidth="2.4" /><path d="M.5 -.5H5.5V5L3 9.5.5 5Z" fill="#d8701e" stroke="#b85a12" /><path d="M2.2 2H4V4H2.2Z" fill="#fff" /><circle cx="15" cy="15.5" r="2.4" fill="#d8701e" /><path d="M15.5 9H18V12H15.5Z" fill="#d8701e" /></>,
  <g stroke="#8f4b97" strokeWidth="1.2"><path d="M8 1.2 1 8.2C.5 8.7.5 9.3 1 9.8L8 16.8C8.5 17.3 9.5 17.3 10 16.8L17 9.8C17.5 9.3 17.5 8.7 17 8.2L10 1.2C9.5 .7 8.5 .7 8 1.2Z" /><path d="M5 4.5 13.2 13M13 4.5 4.8 13M9 1 5.5 5M9 17 12.5 13" /></g>,
  <g stroke={BLUE} strokeWidth="1.1" fill="#d9ecfb"><path d="M.8 2H11.5L17.5 9 11.5 16H.8L7 9Z" /><path d="M5 13 13.5 4.5M8.5 15.5 15 7" /></g>,
];

const Drop = ({ children, className }: P & { className: string }) => (
  <div className={clsx("ml-[4px] flex w-[170px] items-center justify-center border border-dashed border-[#c0bebc] bg-white text-[11.6px] tracking-[-0.05px] whitespace-nowrap", className)}>{children}</div>
);

const VizPane = () => (
  <aside className="flex w-[182px] shrink-0 flex-col border-x border-[#dad8d6] bg-[#f3f2f1] text-[#252423]">
    <div className="flex h-[38px] items-center pl-[8px]">
      <span className="mt-[2px] w-[152px] text-[14.6px] font-semibold tracking-[-0.15px]">Visualizations</span>
      <DoubleChev right />
    </div>
    <span className="pl-[8px] text-[11.5px] leading-[16px] font-semibold tracking-[-0.3px] text-[#323130]">Build visual</span>
    <div className="flex h-[35px] items-start pt-[3px] pl-[8px]">
      <div className="flex h-8 w-8 items-center justify-center bg-[#d2d0ce]">
        <Svg w={24} h={24}>
          <path d="M0 .5H19" stroke="#111" />
          <path d="M.5 5.5H23.5V12.5H.5ZM.5 16.5H23.5V23.5H.5Z" fill="#117865" stroke="#111" strokeDasharray="2 1.5" />
        </Svg>
      </div>
      <Svg w={25} h={25} className="mt-[4px] ml-[38px]">
        <path d="M7 24.3H.7V.7H11L17.5 7.5V9M11 .7V8H17.5" stroke={K} strokeWidth="1.2" />
        <path d="M24 9 14.5 18.5 16.5 20.5ZM14.5 18.5C11 18 11 23 7.5 23.5 12 25.5 17.5 24 16.5 20.5" fill="#fff" stroke={K} strokeWidth="1.2" />
      </Svg>
    </div>
    <Svg w={180} h={14}><path d="M0 12.5H17L24.5 5.5 32 12.5H180" stroke="#7a7876" /></Svg>
    <div className="mt-[10px] grid grid-cols-[repeat(6,18px)] gap-[10px] px-[11px]">
      {gallery.map((g, i) => <Svg key={i} w={18} h={18}>{g}</Svg>)}
    </div>
    <div className="mt-[17px] flex h-[19px] gap-[5px] pl-[12px]">
      {[0, 1, 2].map((i) => <i key={i} className="h-[2px] w-[2px] bg-[#484644]" />)}
    </div>
    <div className="mt-[1px] flex flex-col border-t border-[#dad8d6] pt-[9px] text-[11.5px]">
      <span className="pl-[12px] leading-[16px] tracking-[-0.1px]">Values</span>
      <Drop className="mt-[5px] h-[28px] pt-[1px] pr-[42px]">Add data fields here</Drop>
      <span className="mt-[10px] pl-[12px] leading-[16px] font-semibold tracking-[-0.2px] text-[#484644]">Drill through</span>
      <div className="mt-[9px] flex h-[18px] items-center justify-between pr-[22px] pl-[12px]">
        Cross-report
        <div className="flex h-4 w-8 items-center gap-[2px] rounded-full border border-[#605e5c] bg-white pl-[4px] text-[9.3px] text-[#605e5c]">
          <i className="h-2 w-2 shrink-0 rounded-full bg-[#605e5c]" />Off
        </div>
      </div>
      <div className="mt-[9px] flex h-[18px] items-center justify-between pr-[22px] pl-[12px] tracking-[-0.1px]">
        Keep all filters
        <div className="flex h-4 w-8 items-center gap-[2px] rounded-full bg-[#117865] pl-[5px] text-[9px] font-semibold text-white">
          On<i className="h-2 w-2 shrink-0 rounded-full bg-white" />
        </div>
      </div>
      <Drop className="mt-[9px] h-[26px] pt-[2px]">Add drill-through fields here</Drop>
    </div>
  </aside>
);

const StatusBar = () => (
  <footer className="flex h-[25px] shrink-0 items-center border-t border-b border-t-[#dad8d6] border-b-black bg-[#f3f2f1] pt-[1px] pl-[4px] text-[11.5px] text-[#484644]">
    <span className="w-[1152px]">Page 2 of 2</span>
    <Svg w={120} h={12}>
      <path d="M-2 6.5H2.5" stroke="#484644" strokeWidth="1.5" />
      <path d="M7 6.5H107M113 6.5H121M117 2.5V10.5M57.5 3.5V9" stroke="#605e5c" strokeWidth="1.1" />
      <rect x="38" y="1" width="4" height="11" fill="#484644" />
    </Svg>
    <span className="ml-[13px] w-[43px] text-[#605e5c]">69%</span>
    <Svg w={16} h={12}>
      <path d="M.5 .5H15.5V11.5H.5Z" stroke="#605e5c" /><path d="M3 5V3H5M11 3H13V5M13 7.5V9.5H11M5 9.5H3V7.5" stroke="#605e5c" />
    </Svg>
  </footer>
);

export default function App() {
  return (
    <div className="flex h-[728px] w-[1366px] flex-col overflow-hidden bg-[#f3f2f1] font-['Open_Sans',sans-serif] [&_button]:cursor-pointer">
      <TitleBar />
      <Menu />
      <Ribbon />
      <main className="flex h-[543px] shrink-0">
        <Rail />
        <section className="flex w-[1109px] shrink-0 flex-col">
          <div className="flex">
            <div className="w-[1076px] shrink-0"><Canvas /></div>
            <div className="flex w-[33px] flex-col items-center border-l border-[#a19f9d] bg-white pt-[13px]">
              <DoubleChev />
              <Svg w={11} h={12} className="mt-[17px] ml-[3px]"><path d="M10.5 .7V11.3L6 7.500H.6V4.500H6Z" stroke={K} strokeWidth="1.1" /></Svg>
              <span className="mt-[8px] text-[14px] leading-[16px] font-semibold tracking-[0.1px] [writing-mode:vertical-rl]">Filters</span>
            </div>
          </div>
          <Tabs />
        </section>
        <VizPane />
        <aside className="flex w-[34px] flex-col items-center pt-[13px]">
          <DoubleChev />
          <span className="mt-[15px] mr-[4px] text-[14px] leading-[16px] font-semibold [writing-mode:vertical-rl]">Data</span>
        </aside>
      </main>
      <StatusBar />
    </div>
  );
}
